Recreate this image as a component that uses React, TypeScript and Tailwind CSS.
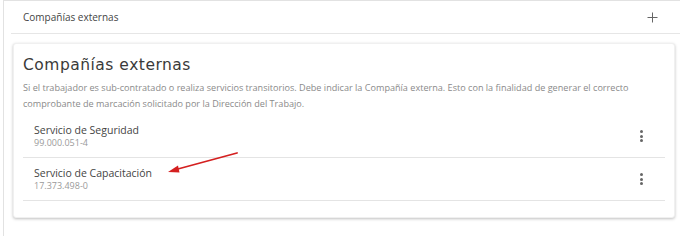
import React from "react";

function Kebab() {
  return (
    <div className="flex flex-col items-center gap-[1.5px] w-[12px]">
      <span className="block w-[3px] h-[3px] rounded-full bg-[#666]" />
      <span className="block w-[3px] h-[3px] rounded-full bg-[#666]" />
      <span className="block w-[3px] h-[3px] rounded-full bg-[#666]" />
    </div>
  );
}

function Item({ name, rut }: { name: string; rut: string }) {
  return (
    <div className="flex items-center h-[43px] border-b border-[#e4e4e4] pl-[11px] pr-[18px]">
      <div className="flex-1 flex flex-col">
        <span className="text-[10.5px] leading-[14px] text-[#444]">{name}</span>
        <span className="text-[9px] leading-[12px] text-[#9a9a9a]">{rut}</span>
      </div>
      <Kebab />
    </div>
  );
}

export default function App() {
  return (
    <div
      className="w-[688px] h-[236px] bg-white relative overflow-hidden"
      style={{ fontFamily: '"Open Sans", "DejaVu Sans", sans-serif' }}
    >
      <div className="ml-[3px] w-[677px] h-full border-t border-l border-[#e2e2e2]">
        <div className="ml-[7px] h-[33px] flex items-center border-b border-[#e6e6e6] pl-[12px] pr-[22px]">
          <span className="flex-1 text-[10px] text-[#444]">Compañías externas</span>
          <svg width="11" height="11" viewBox="0 0 11 11" className="text-[#666]">
            <path d="M5.5 0.5v10M0.5 5.5h10" stroke="currentColor" strokeWidth="1" />
          </svg>
        </div>
        <div className="ml-[9px] mt-[9px] w-[662px] h-[175px] rounded-[3px] bg-white shadow-[0_1px_3px_rgba(0,0,0,0.25)] border border-[#f0f0f0] pt-[12px] pl-[9px] pr-[9px]">
          <div
            className="text-[15.5px] leading-[18px] tracking-[0.5px] text-[#3a3a3a]"
            style={{ fontFamily: '"DejaVu Sans", sans-serif' }}
          >
            Compañías externas
          </div>
          <p className="mt-[6px] text-[9.1px] leading-[16px] text-[#8a8a8a]">
            Si el trabajador es sub-contratado o realiza servicios transitorios. Debe indicar la Compañía externa. Esto con la finalidad de generar el correcto comprobante de marcación solicitado por la Dirección del Trabajo.
          </p>
          <div className="mt-[3px]">
            <Item name="Servicio de Seguridad" rut="99.000.051-4" />
            <Item name="Servicio de Capacitación" rut="17.373.498-0" />
          </div>
        </div>
      </div>
      <svg className="absolute left-0 top-0" width="688" height="236" viewBox="0 0 688 236">
        <line x1="237" y1="153" x2="176" y2="169.5" stroke="#d42020" strokeWidth="1.8" strokeLinecap="round" />
        <path d="M168 172 L178 165.5 L179.5 172.5 Z" fill="#d42020" />
      </svg>
    </div>
  );
}
